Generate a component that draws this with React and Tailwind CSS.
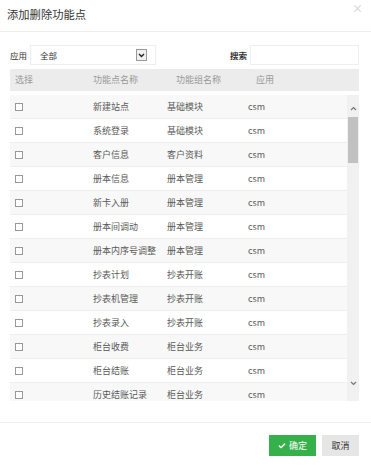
import { Check } from "lucide-react";

const rows = [
  ["新建站点", "基础模块"],
  ["系统登录", "基础模块"],
  ["客户信息", "客户资料"],
  ["册本信息", "册本管理"],
  ["新卡入册", "册本管理"],
  ["册本间调动", "册本管理"],
  ["册本内序号调整", "册本管理"],
  ["抄表计划", "抄表开账"],
  ["抄表机管理", "抄表开账"],
  ["抄表录入", "抄表开账"],
  ["柜台收费", "柜台业务"],
  ["柜台结账", "柜台业务"],
  ["历史结账记录", "柜台业务"],
];

const App = () => {
  return (
    <div
      className="w-[371px] h-[467px] bg-white flex flex-col text-[#5a5a5a]"
      style={{ fontFamily: '"Noto Sans CJK SC", "Noto Sans", sans-serif' }}
    >
      {/* header */}
      <div className="h-[32px] shrink-0 border-b border-[#eee] flex justify-between pl-[7px] pr-[8px]">
        <span className="pt-[6px] text-[11.3px] leading-[16px] text-[#333]">
          添加删除功能点
        </span>
        <span className="pt-[1px] text-[11px] leading-[14px] text-[#ccc]">×</span>
      </div>

      {/* filters */}
      <div className="mt-[13px] h-[20px] flex items-center pl-[10px] pr-[12px] shrink-0">
        <span className="text-[8.5px] text-[#333] w-[20px]">应用</span>
        <div className="w-[126px] h-[20px] border border-[#eee] flex items-center justify-between pl-[9px] pr-[8px]">
          <span className="text-[8.5px] text-[#333]">全部</span>
          <span className="w-[11px] h-[12px] border border-[#999] bg-[#f0f0f0] flex items-center justify-center">
            <svg width="7" height="5" viewBox="0 0 7 5">
              <path d="M1 1 L3.5 3.5 L6 1" fill="none" stroke="#222" strokeWidth="1.4" />
            </svg>
          </span>
        </div>
        <span className="ml-auto text-[8.5px] font-bold text-[#333] mr-[3px]">搜索</span>
        <div className="w-[109px] h-[20px] border border-[#eee]" />
      </div>

      {/* table head */}
      <div className="mt-[4px] ml-[10px] mr-[12px] h-[22px] shrink-0 bg-[#ececec] grid grid-cols-[83px_83px_80px_1fr] items-center text-[9px] text-[#999]">
        <span className="pl-[5px]">选择</span>
        <span>功能点名称</span>
        <span>功能组名称</span>
        <span>应用</span>
      </div>

      {/* table body */}
      <div className="mt-[4px] ml-[10px] mr-[12px] h-[306px] shrink-0 flex overflow-hidden">
        <div className="flex-1 flex flex-col">
          {rows.map(([name, group], i) => (
            <div
              key={name}
              className={`h-[24px] shrink-0 grid grid-cols-[83px_74px_81px_1fr] items-center border-b border-[#eee] text-[9px] ${
                i % 2 === 0 ? "bg-[#f8f8f8]" : "bg-white"
              }`}
            >
              <span className="pl-[5px]">
                <span className="block w-[8px] h-[8px] border border-[#999] bg-white" />
              </span>
              <span className="whitespace-nowrap">{name}</span>
              <span className="whitespace-nowrap">{group}</span>
              <span>csm</span>
            </div>
          ))}
        </div>
        <div className="w-[12px] bg-[#f1f1f1] flex flex-col items-center">
          <div className="h-[22px] flex items-center justify-center pt-[4px]">
            <svg width="7" height="5" viewBox="0 0 7 5">
              <path d="M1 4 L3.5 1.5 L6 4" fill="none" stroke="#777" strokeWidth="1.2" />
            </svg>
          </div>
          <div className="w-[10px] h-[46px] bg-[#c1c1c1]" />
          <div className="flex-1" />
          <div className="h-[24px] flex items-start justify-center pt-[4px]">
            <svg width="7" height="5" viewBox="0 0 7 5">
              <path d="M1 1 L3.5 3.5 L6 1" fill="none" stroke="#777" strokeWidth="1.2" />
            </svg>
          </div>
        </div>
      </div>

      {/* footer */}
      <div className="mt-[21px] border-t border-[#eee] flex justify-end gap-[6px] pt-[12px] pr-[12px]">
        <button className="w-[47px] h-[21px] bg-[#36b04a] text-white text-[9px] flex items-center justify-center gap-[3px]">
          <Check size={8} strokeWidth={4} />
          确定
        </button>
        <button className="w-[37px] h-[21px] bg-[#e6e6e6] text-[#333] text-[9px] flex items-center justify-center">
          取消
        </button>
      </div>
    </div>
  );
};

export default App;
